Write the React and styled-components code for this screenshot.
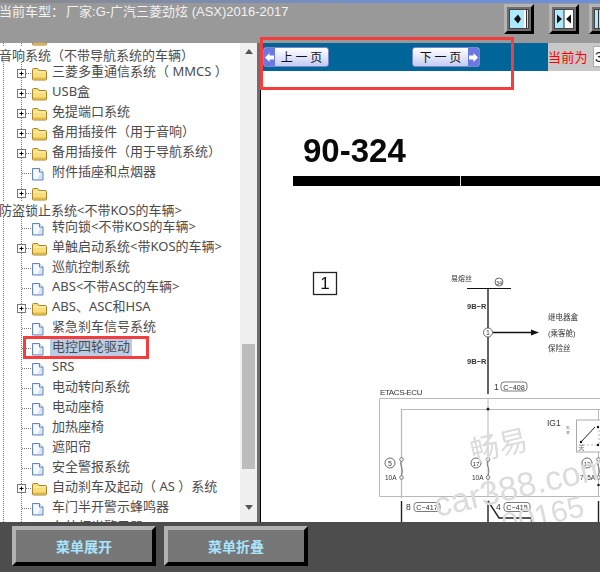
import React from "react";
import styled, { createGlobalStyle } from "styled-components";

const Global = createGlobalStyle`
  html, body { margin: 0; padding: 0; overflow: hidden; background: #fff; }
  * { box-sizing: border-box; }
`;
const CJK = `"Noto Sans", "Noto Sans CJK SC", sans-serif`;
const Page = styled.div`
  width: 600px; height: 572px; display: grid; grid-template-columns: 600px; grid-template-rows: 43px 479px 50px;
  overflow: hidden; font-family: ${CJK}; position: relative; text-spacing-trim: space-all;
`;
const TopBar = styled.header`
  background: #999; border-top: 3px solid; border-image: linear-gradient(90deg, #8a8a8a, #6f8fd6 70%, #6a8fdc) 1;
  display: flex; align-items: flex-start; position: relative; padding-top: 1px;
`;
const Title = styled.div`
  font: 13px/15px "Liberation Sans", "Noto Sans CJK SC", sans-serif; color: #f2f2f2; margin-left: -1px; white-space: pre;
  flex: 1; min-width: 0;
`;
const TitleLabel = styled.span`margin-right: 2px;`;
const ToolGroup = styled.div`display: flex; gap: 15px; width: 96px; flex: none;`;
const ToolButton = styled.button`
  flex: none; width: 30px; height: 30px; padding: 0; background: #7c7c7c;
  border: 3px solid; border-color: #b4b4b4 #000 #000 #b4b4b4; display: flex; align-items: center; justify-content: center;
  svg { display: block; }
  & + & + & { margin-left: -5px; }
`;
const Main = styled.div`display: flex; min-height: 0; min-width: 0;`;
const TreePane = styled.aside`
  width: 257px; flex: none; display: flex; background: #fff; overflow: hidden; position: relative;
`;
const TreeList = styled.ul`list-style: none; margin: -16px 0 0; padding: 0; width: 240px; flex: none;`;
const Row = styled.li`
  height: 20px; display: flex; align-items: center; font-size: 13px; line-height: 20px; color: #4b4b4b; white-space: nowrap;
`;
const RootRow = styled(Row)`height: 15px; margin-left: -1px; position: relative;`;
const Gutter = styled.svg`flex: none; width: 50px; height: 20px; display: block;`;
const RowText = styled.span`
  padding: 0 2px; height: 18px; line-height: 17px; background: ${p => (p.$selected ? "#b9cde6" : "transparent")};
`;
const Scrollbar = styled.div`
  width: 17px; flex: none; background: #f0f0f0; display: flex; flex-direction: column; align-items: center; position: relative;
`;
const Arrow = styled.i`
  display: block; width: 0; height: 0; border-left: 4px solid transparent; border-right: 4px solid transparent;
  ${p => (p.$up ? "border-bottom: 5px solid #555;" : "border-top: 5px solid #555;")}
  margin-top: ${p => p.$mt}px;
`;
const Thumb = styled.div`width: 13px; height: 125px; margin-top: 290px; background: #bcbcbc;`;
const Divider = styled.div`width: 4px; flex: none; background: linear-gradient(90deg, #6e6e6e 0 75%, #000 75%);`;
const DocPane = styled.section`flex: 1; min-width: 0; background: #fff; overflow: hidden; position: relative;`;
const NavBar = styled.nav`display: flex; height: 28px;`;
const NavBlue = styled.div`
  width: 287px; flex: none; background: #006699; display: flex; align-items: flex-start; padding: 4px 0 0 2px;
`;
const PageButton = styled.button`
  height: 20px; width: ${p => p.$w}px; padding: 0; margin-left: ${p => p.$ml || 0}px; display: flex; align-items: center;
  border: 1px solid #7d86c8; border-radius: 3px; background: linear-gradient(180deg, #fff, #e6e9fb 45%, #c3caf2);
  font: 12px/18px "Noto Sans CJK SC", sans-serif; color: #111; overflow: hidden;
`;
const PageLabel = styled.span`flex: 1; text-align: center; white-space: pre;`;
const PageArrow = styled.span`
  flex: none; width: 11px; height: 100%; background: #6a78e0; color: #fff; display: flex; align-items: center; justify-content: center;
`;
const Pager = styled.div`
  flex: 1; background: #c8c8c8; display: flex; align-items: flex-start; gap: 5px; padding: 3px 0 0 0;
  color: #f00; font: 13px/22px "Noto Sans CJK SC", sans-serif; white-space: nowrap; min-width: 0; letter-spacing: .3px; overflow: hidden;
`;
const PageInput = styled.input`
  width: 40px; height: 21px; flex: none; border: 1px solid #aaa; background: #fff; padding: 0 1px; color: #222; font: 14px "Liberation Sans", sans-serif;
`;
const Sheet = styled.div`padding: 61px 0 0 32px; filter: blur(.3px);`;
const Code = styled.h1`
  margin: 0; font: 700 33px/38px "Liberation Sans", sans-serif; color: #0a0a0a; padding-left: 10px;
`;
const Rule = styled.div`
  height: 10px; margin-top: 6px; margin-right: -20px;
  background: linear-gradient(90deg, #000 0 167px, #ddd 167px 168px, #000 168px);
`;
const Diagram = styled.svg`display: block; width: 339px; height: 262px; margin: 74px 0 0 -32px; filter: blur(.25px);`;
const NoteBox = styled.div`position: absolute; border: 3px solid #f63d3d; pointer-events: none;`;
const BottomBar = styled.footer`background: #4d4d4d; display: flex; gap: 8px; padding: 4px 0 0 12px;`;
const MenuButton = styled.button`
  width: 144px; height: 40px; border: 4px solid; border-color: #b2b2b2 #000 #000 #b2b2b2; background: #777; padding: 0;
  color: #a9e4ff; font: 700 14px/30px "Noto Sans CJK SC", sans-serif;
`;

const Lines = () => (
  <g stroke="#777" strokeDasharray="1 1" fill="none">
    <path d="M3.5 -6V30" />
    <path d="M21.5 -6V30" />
  </g>
);
const Folder = () => (
  <g>
    <path d="M32.5 7.5a1 1 0 0 1 1-1h4l1.5 2h6.5a1 1 0 0 1 1 1v7.5a1 1 0 0 1-1 1h-12a1 1 0 0 1-1-1z" fill="#f8dd7c" stroke="#a5852c" />
    <path d="M33.5 9.5h12v1h-12z" fill="#fff3b8" />
    <path d="M33 15.5h13V17h-13z" fill="#e8b83e" />
  </g>
);
const Doc = () => (
  <g>
    <path d="M32.5 6.5h7l3.5 3.5v8h-10.5z" fill="#d5e4fb" stroke="#6585b4" />
    <path d="M39.5 6.5v3.5h3.5" fill="#fff" stroke="#6585b4" />
    <path d="M33.5 7.5h5v3.5h2l-3 6h-4z" fill="#f6f9ff" />
  </g>
);
const Plus = () => (
  <g>
    <path d="M26 11.5H32" stroke="#777" strokeDasharray="1 1" />
    <rect x="17.5" y="7.5" width="8" height="8" fill="#fff" stroke="#777" />
    <path d="M19.5 11.5h4M21.5 9.5v4" stroke="#000" />
  </g>
);
const TreeRow = ({ kind, text, selected }) => (
  <Row>
    <Gutter viewBox="0 0 50 20">
      <Lines />
      {kind === "folder" ? <Plus /> : <path d="M22 11.5H32" stroke="#777" strokeDasharray="1 1" />}
      {kind === "folder" ? <Folder /> : <Doc />}
    </Gutter>
    <RowText $selected={selected}>{text}</RowText>
  </Row>
);
const tree = [
  ["folder", ""],
  ["root", "音响系统（不带导航系统的车辆）"],
  ["folder", "三菱多重通信系统（ MMCS ）"],
  ["folder", "USB盒"],
  ["folder", "免提端口系统"],
  ["folder", "备用插接件（用于音响）"],
  ["folder", "备用插接件（用于导航系统）"],
  ["doc", "附件插座和点烟器"],
  ["folder", ""],
  ["root", "防盗锁止系统<不带KOS的车辆>"],
  ["doc", "转向锁<不带KOS的车辆>"],
  ["folder", "单触启动系统<带KOS的车辆>"],
  ["doc", "巡航控制系统"],
  ["doc", "ABS<不带ASC的车辆>"],
  ["folder", "ABS、ASC和HSA"],
  ["doc", "紧急刹车信号系统"],
  ["doc", "电控四轮驱动", true],
  ["doc", "SRS"],
  ["doc", "电动转向系统"],
  ["doc", "电动座椅"],
  ["doc", "加热座椅"],
  ["doc", "遮阳帘"],
  ["doc", "安全警报系统"],
  ["folder", "自动刹车及起动（ AS ）系统"],
  ["doc", "车门半开警示蜂鸣器"],
  ["doc", "车外灯光警示器"],
];

const ToolIcon = ({ v }) => (
  <svg width="24" height="24" viewBox="0 0 24 24">
    <rect x="0" y="0" width="24" height="24" fill="#6e6e6e" />
    <rect x="2.5" y="2.5" width="19" height="19" fill="#aee8ff" stroke="#444" />
    {v === 0 && <><rect x="17" y="3" width="2" height="18" fill="#fff" /><rect x="19" y="3" width="1" height="18" fill="#333" /><path d="M7 12l4-4.5 3 4.5-3 4.5z" fill="#111" /></>}
    {v === 1 && <><rect x="12" y="3" width="9" height="18" fill="#fff" /><rect x="11.5" y="3" width="1" height="18" fill="#333" /><path d="M5 7.5l5 4.5-5 4.5zM19 7.5l-5 4.5 5 4.5z" fill="#111" /></>}
    {v === 2 && <rect x="6" y="3" width="1" height="18" fill="#333" />}
  </svg>
);

const T = styled.text`font-family: "Liberation Sans", "Noto Sans CJK SC", sans-serif; fill: #333;`;
const Mark = styled.text`font-family: "Liberation Sans", "Noto Sans CJK SC", sans-serif; fill: #dcdcdc;`;

const Circled = ({ x, y, r = 4.5, t, size = 7 }) => (
  <g>
    <circle cx={x} cy={y} r={r} fill="#fff" stroke="#444" strokeWidth=".8" />
    <T x={x} y={y + 2.5} fontSize={size} textAnchor="middle">{t}</T>
  </g>
);
const Pill = ({ x, y, t }) => (
  <g>
    <rect x={x} y={y - 5.5} width="26" height="9" rx="3" fill="none" stroke="#444" strokeWidth=".7" />
    <T x={x + 13} y={y + 2} fontSize="7.2" textAnchor="middle">{t}</T>
  </g>
);
const Fuse = ({ x }) => (
  <g fill="none" stroke="#555" strokeWidth=".8">
    <circle cx={x} cy="199.5" r="1.8" fill="#fff" />
    <path d={`M${x} 201c-3 4 3 7 0 14`} />
    <circle cx={x} cy="217.5" r="1.8" fill="#fff" />
  </g>
);
const Wiring = () => (
  <Diagram viewBox="0 0 339 262">
    <rect x="52.5" y="12.5" width="23" height="22" fill="none" stroke="#222" strokeWidth="1.3" />
    <T x="64" y="29" fontSize="17" textAnchor="middle" style={{ fill: "#111" }}>1</T>
    <T x="190" y="21" fontSize="7">易熔丝</T>
    <Circled x={238} y={22} r={4} t="34" size={5.5} />
    <path d="M206 28.5H250" stroke="#111" strokeWidth="1" />
    <path d="M227 28.5V134" stroke="#222" strokeWidth="1.4" />
    <T x="206" y="49" fontSize="7.5" style={{ fontWeight: 700 }}>9B−R</T>
    <T x="206" y="104" fontSize="7.5" style={{ fontWeight: 700 }}>9B−R</T>
    <Circled x={227} y={72.5} t="1" />
    <path d="M232 72.5H272" stroke="#111" strokeWidth="1.3" />
    <path d="M270 69.5l8 3-8 3z" fill="#111" />
    <T x="287" y="60" fontSize="7.5">继电器盒</T>
    <T x="287" y="75.5" fontSize="7.5">(乘客舱)</T>
    <T x="287" y="91" fontSize="7.5">保险丝</T>
    <T x="233" y="130" fontSize="8.5">1</T>
    <Pill x={240} y={127.5} t="C−408" />
    <T x="119" y="135" fontSize="8" letterSpacing="-.4">ETACS-ECU</T>
    <g fill="none" stroke="#b8b8b8" strokeWidth="1">
      <path d="M339 138.5H118.5V236.5H339" />
      <path d="M140.5 238V149.5H339" strokeWidth="1.2" />
      <path d="M227 138V236" />
      <path d="M337.5 149V236" />
    </g>
    <circle cx="227" cy="149" r="1.5" fill="#222" />
    <T x="286" y="166" fontSize="8.5">IG1</T>
    <T x="305" y="169" fontSize="3.6" style={{ fill: "#777" }}>电</T>
    <T x="305" y="174" fontSize="3.6" style={{ fill: "#777" }}>源</T>
    <rect x="315.5" y="160" width="30" height="32" fill="#fff" stroke="#aaa" />
    <path d="M320 182l14-15" stroke="#222" strokeWidth="1" />
    <path d="M322 185h15M338 170v14" stroke="#888" strokeWidth=".6" strokeDasharray="2 2" />
    <circle cx="320" cy="182" r="1.2" fill="#111" /><circle cx="337" cy="167" r="1.2" fill="#111" /><circle cx="337" cy="185" r="1.2" fill="#111" />
    <T x="317" y="190" fontSize="6.5" style={{ fill: "#777" }}>关</T>
    <Circled x={129} y={203} r={5} t="5" />
    <Circled x={215} y={203} r={5} t="17" size={6} />
    <Circled x={326} y={203} r={5} t="12" size={6} />
    <Fuse x={140.5} /><Fuse x={227} /><Fuse x={337.5} />
    <T x="124" y="220" fontSize="6.5">10A</T>
    <T x="211" y="220" fontSize="6.5">10A</T>
    <T x="319" y="220" fontSize="6.5">7. 5A</T>
    <circle cx="337.5" cy="225" r="1.3" fill="#222" />
    <g fill="none" stroke="#222" strokeWidth="1.4">
      <path d="M140.5 241V262M227 241V262M337.5 241V262" />
      <path d="M227 241l11 17h32.5V262" />
    </g>
    <T x="145" y="250" fontSize="8.5">8</T>
    <Pill x={153} y={248} t="C−417" />
    <T x="235" y="250" fontSize="8.5">4</T>
    <Pill x={243} y={248} t="C−415" />
    <Mark x="212" y="202" fontSize="29" transform="rotate(-13 212 202)">畅易</Mark>
    <Mark x="176" y="257" fontSize="34" transform="rotate(-13 176 257)">car388.com</Mark>
    <Mark x="243.5" y="274.5" fontSize="30" transform="rotate(-13 243.5 274.5)">00165</Mark>
  </Diagram>
);

export default function App() {
  return (
    <Page lang="zh-CN">
      <Global />
      <TopBar>
        <Title><TitleLabel>当前车型：</TitleLabel>厂家:G-广汽三菱劲炫 (ASX)2016-2017</Title>
        <ToolGroup>
          <ToolButton aria-label="左"><ToolIcon v={0} /></ToolButton>
          <ToolButton aria-label="中"><ToolIcon v={1} /></ToolButton>
          <ToolButton aria-label="右"><ToolIcon v={2} /></ToolButton>
        </ToolGroup>
      </TopBar>
      <Main>
        <TreePane>
          <TreeList>
            {tree.map(([k, t, s], i) =>
              k === "root" ? <RootRow key={i}>{t}</RootRow> : <TreeRow key={i} kind={k} text={t} selected={s} />
            )}
          </TreeList>
          <Scrollbar>
            <Arrow $up $mt={6} />
            <Thumb />
            <Arrow $mt={36} />
          </Scrollbar>
          <NoteBox style={{ left: 23, top: 293, width: 126, height: 23 }} />
        </TreePane>
        <Divider />
        <DocPane>
          <NavBar>
            <NavBlue>
              <PageButton $w={66}>
                <PageArrow><svg width="9" height="9" viewBox="0 0 9 9"><path d="M0 4.5L4.5 0v2.5H9v4H4.5V9z" fill="#fff" /></svg></PageArrow>
                <PageLabel>上 一 页</PageLabel>
              </PageButton>
              <PageButton $w={68} $ml={83}>
                <PageLabel>下 一 页</PageLabel>
                <PageArrow><svg width="9" height="9" viewBox="0 0 9 9"><path d="M9 4.5L4.5 0v2.5H0v4h4.5V9z" fill="#fff" /></svg></PageArrow>
              </PageButton>
            </NavBlue>
            <Pager>当前为<PageInput defaultValue="3" /></Pager>
          </NavBar>
          <Sheet>
            <Code>90-324</Code>
            <Rule />
            <Wiring />
          </Sheet>
        </DocPane>
      </Main>
      <BottomBar>
        <MenuButton>菜单展开</MenuButton>
        <MenuButton>菜单折叠</MenuButton>
      </BottomBar>
      <NoteBox style={{ left: 260, top: 37, width: 254, height: 53 }} />
    </Page>
  );
}
